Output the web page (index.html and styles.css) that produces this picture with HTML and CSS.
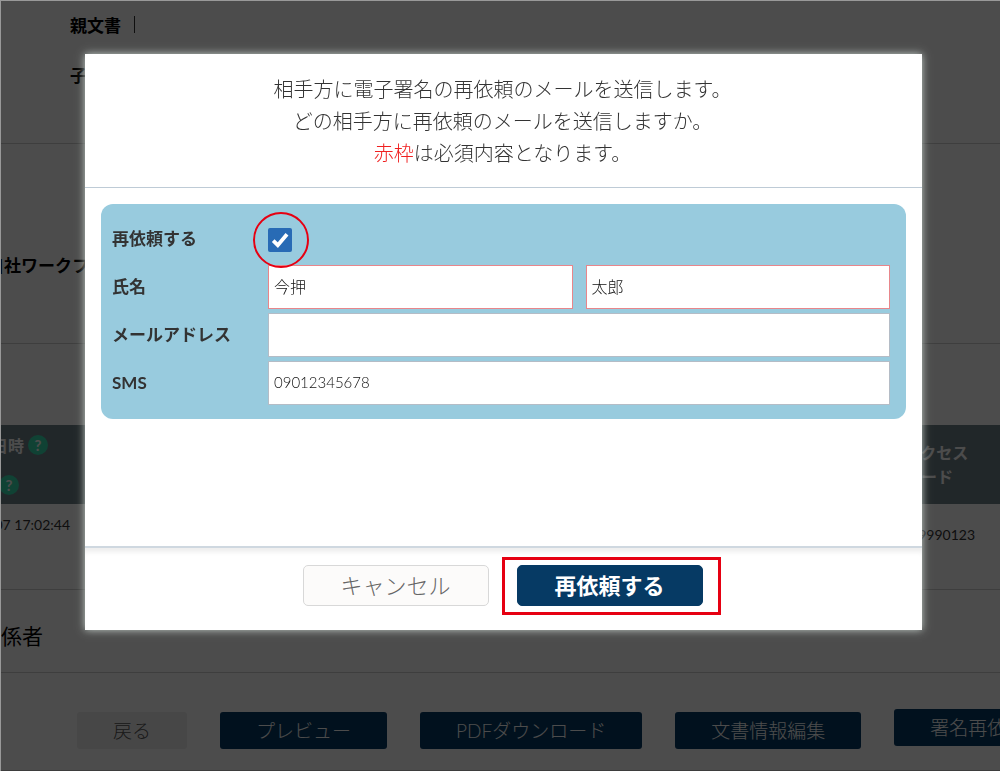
FILE: index.html
```html
<!DOCTYPE html>
<html lang="ja">
<head>
<meta charset="utf-8">
<meta name="viewport" content="width=device-width, initial-scale=1">
<title>電子署名の再依頼</title>
<link rel="stylesheet" href="styles.css">
</head>
<body>
<main class="page">
  <section class="section documents">
    <div class="doc-row"><span class="doc-label">親文書</span><span class="doc-sep"></span></div>
    <div class="doc-row"><span class="doc-label">子文書</span></div>
  </section>
  <section class="section workflow"><span class="workflow-label">自社ワークフ</span></section>
  <section class="section history">
    <div class="history-head">
      <div class="head-dates">
        <div class="head-line first">日時 <span class="help">?</span></div>
        <div class="head-line second"><span class="help">?</span></div>
      </div>
      <div class="head-code">アクセス<br>コード</div>
    </div>
    <div class="history-row">
      <span class="cell-date">07 17:02:44</span>
      <span class="cell-code">9990123</span>
    </div>
  </section>
  <section class="section people"><h2 class="people-title">関係者</h2></section>
  <div class="actions">
    <button class="action back" type="button">戻る</button>
    <button class="action" type="button">プレビュー</button>
    <button class="action" type="button">PDFダウンロード</button>
    <button class="action" type="button">文書情報編集</button>
    <button class="action raised" type="button">署名再依頼</button>
  </div>
</main>
<div class="backdrop">
  <form class="dialog" role="dialog" aria-modal="true" aria-labelledby="dialog-text">
    <header class="dialog-head" id="dialog-text">
      相手方に電子署名の再依頼のメールを送信します。<br>
      どの相手方に再依頼のメールを送信しますか。<br>
      <span class="required">赤枠</span>は必須内容となります。
    </header>
    <div class="dialog-body">
      <div class="panel">
        <label class="label" for="again">再依頼する</label>
        <div class="check-wrap">
          <input class="check" id="again" type="checkbox" checked>
          <svg class="tick" viewBox="0 0 24 24" aria-hidden="true"><path d="M5.2 12.6 9.8 17.2 19 6.2" fill="none" stroke="#fff" stroke-width="3.8"/></svg>
          <span class="ring"></span>
        </div>
        <label class="label" for="family">氏名</label>
        <div class="names">
          <input class="field must" id="family" type="text" value="今押">
          <input class="field must" type="text" value="太郎" aria-label="名">
        </div>
        <label class="label" for="mail">メールアドレス</label>
        <input class="field" id="mail" type="email">
        <label class="label" for="sms">SMS</label>
        <input class="field number" id="sms" type="tel" value="09012345678">
      </div>
    </div>
    <footer class="dialog-foot">
      <button class="btn cancel" type="button">キャンセル</button>
      <div class="marked"><button class="btn submit" type="button">再依頼する</button></div>
    </footer>
  </form>
</div>
</body>
</html>
```
FILE: styles.css
```css
* { box-sizing: border-box; }
body {
  margin: 0;
  background: #fff;
  color: #333;
  font-family: Lato, "Noto Sans CJK JP", sans-serif;
  font-size: 16px;
  overflow: hidden;
}
button, input { font-family: inherit; }

/* Page behind the dialog */
.page { min-height: 100vh; overflow: hidden; border-bottom: 1px solid #ccc; }
.section { border-bottom: 1px solid #d0d0d0; }
.documents { padding: 0 70px 43px; color: #000; }
.doc-row { display: flex; align-items: center; gap: 13px; height: 50px; padding-bottom: 2px; font-size: 17px; font-weight: 700; }
.doc-sep { width: 1px; height: 17px; background: #333; }
.workflow { display: flex; align-items: center; height: 200px; padding-top: 42px; color: #000; font-size: 17px; font-weight: 700; }
.workflow-label { width: 89px; display: flex; justify-content: flex-end; white-space: nowrap; }
.history { padding-top: 81px; }
.history-head { display: flex; justify-content: space-between; height: 79px; background: #718289; color: #fff; font-weight: 700; }
.head-line { display: flex; align-items: center; justify-content: flex-end; gap: 4px; height: 40px; white-space: nowrap; }
.first { width: 48px; }
.second { width: 19px; }
.help {
  flex: none;
  width: 20px;
  height: 20px;
  border-radius: 50%;
  background: #38dcb0;
  font-size: 15px;
  line-height: 20px;
  text-align: center;
}
.head-code { width: 95px; padding-top: 16px; line-height: 24px; }
.history-row { display: flex; justify-content: space-between; height: 85px; padding: 11px 25px 0 0; font-size: 14px; line-height: 20px; }
.cell-date { display: flex; justify-content: flex-end; width: 70px; white-space: nowrap; }
.cell-code { padding-top: 10px; }
.people { display: flex; align-items: center; height: 83px; padding-top: 8px; }
.people-title { display: flex; justify-content: flex-end; width: 43px; margin: 0; color: #000; font-size: 21px; font-weight: 400; white-space: nowrap; }
.actions { display: flex; align-items: flex-end; gap: 33px; height: 76px; padding: 36px 0 0 77px; white-space: nowrap; }
.action {
  flex: none;
  height: 37px;
  padding: 0 36px;
  border: 0;
  border-radius: 3px;
  background: #063a64;
  color: #fff;
  font-size: 19px;
  font-weight: 300;
  line-height: 36px;
}
.back { background: #eee; color: #555; }
.raised { align-self: flex-start; }

/* Dialog */
.backdrop {
  position: fixed;
  inset: 0;
  padding: 53px 78px 0 84px;
  border-top: 1px solid #999;
  border-left: 1px solid #999;
  background: rgba(0, 0, 0, .7);
  background-clip: padding-box;
}
.dialog { display: flex; flex-direction: column; background: #fff; box-shadow: 0 0 8px #c4cec9; }
.dialog-head {
  padding: 19px 18px 18px 16px;
  border-bottom: 1px solid #becbd6;
  font-size: 20px;
  font-weight: 300;
  line-height: 32px;
  text-align: center;
}
.required { color: #f02020; }
.dialog-body { min-height: 358px; padding: 16px; }
.panel {
  display: grid;
  grid-template-columns: 156px 1fr;
  grid-auto-rows: 44px;
  row-gap: 4px;
  align-items: center;
  padding: 13px 16px 14px 11px;
  border-radius: 12px;
  background: #98cbde;
}
.label { font-size: 17px; line-height: 24px; font-weight: 700; }
.check-wrap { position: relative; width: 24px; height: 26px; padding-top: 2px; }
.check { appearance: none; display: block; width: 24px; height: 24px; margin: 0; border-radius: 2px; background: #286bb5; }
.tick { position: absolute; inset: 2px 0 0; pointer-events: none; }
.ring { position: absolute; inset: -14px -17px -16px -15px; border: 2px solid #e60012; border-radius: 50%; pointer-events: none; }
.names { display: grid; grid-template-columns: 1fr 1fr; gap: 13px; }
.field {
  width: 100%;
  min-width: 0;
  height: 44px;
  padding: 0 5px 2px;
  border: 1px solid #b4bcc6;
  border-radius: 0;
  background: #fff;
  color: #111;
  font-size: 16px;
  font-weight: 300;
}
.number { font-size: 15px; }
.must { border-color: #e8868b; }
.dialog-foot {
  display: flex;
  justify-content: center;
  gap: 28px;
  padding: 17px 2px 24px 0;
  border-top: 2px solid #cfd8e0;
  box-shadow: inset 0 6px 5px -2px #eee;
}
.btn { display: block; width: 186px; height: 41px; padding: 0; border: 1px solid #d8d8d8; border-radius: 5px; font-size: 22px; line-height: 37px; }
.cancel { background: #fcfbfa; color: #666; font-weight: 300; }
.submit { border-color: #063a64; background: #063a64; color: #fff; font-weight: 700; }
.marked { position: relative; }
.marked::after { content: ""; position: absolute; inset: -8px -18px -9px -15px; border: 3px solid #e60012; pointer-events: none; }
```
